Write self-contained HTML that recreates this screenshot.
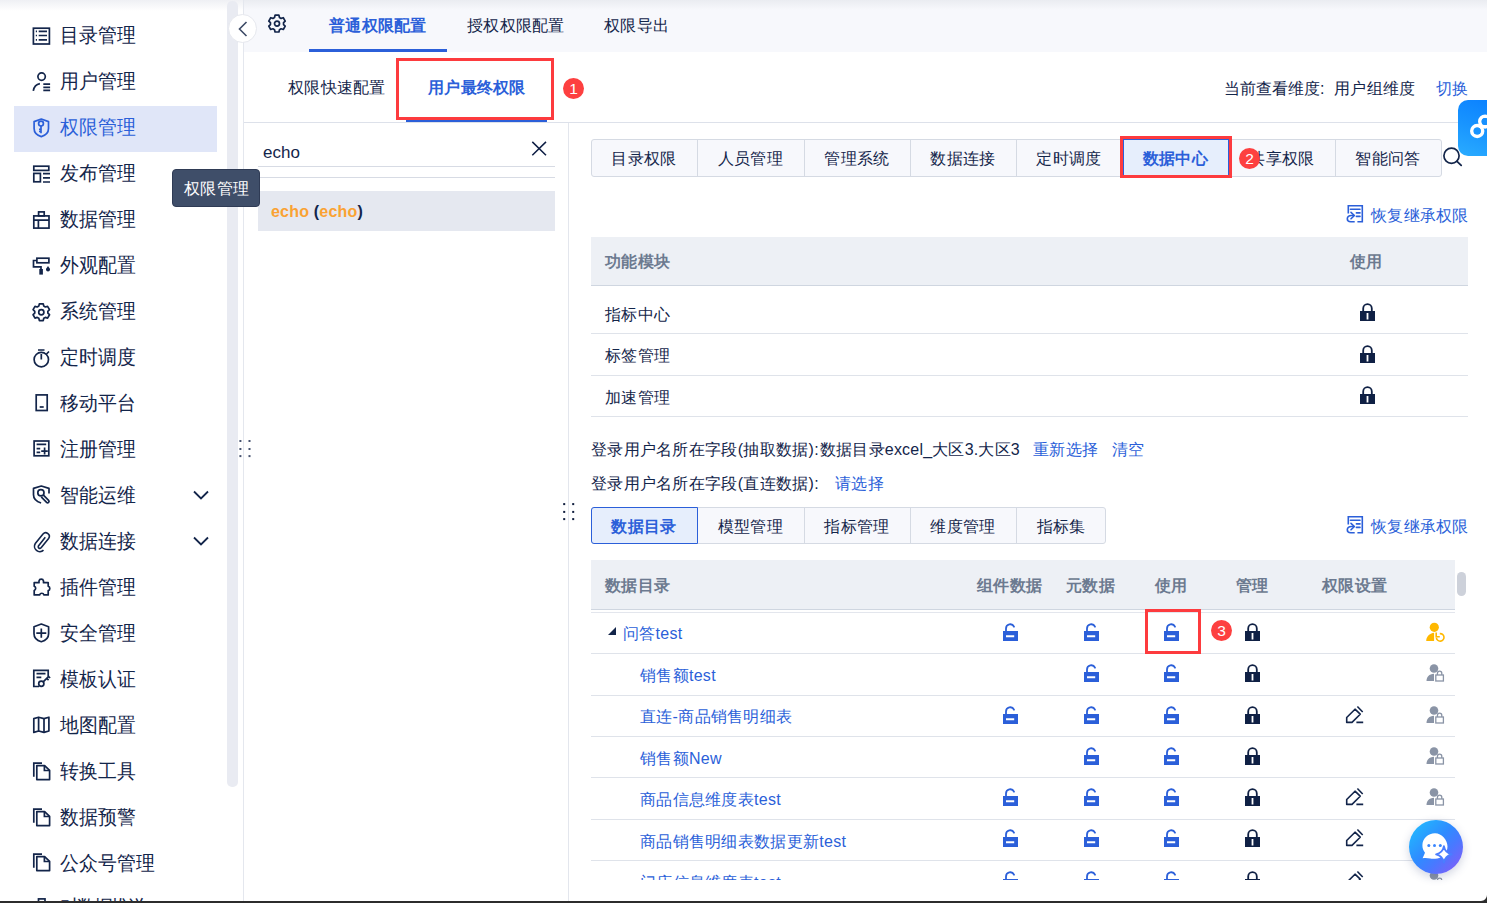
<!DOCTYPE html>
<html><head><meta charset="utf-8">
<style>
*{box-sizing:border-box;margin:0;padding:0}
html,body{width:1487px;height:903px;overflow:hidden;background:#fff;font-family:"Liberation Sans",sans-serif;color:#13254a}
.a{position:absolute}
.t{position:absolute;white-space:nowrap;line-height:1;letter-spacing:.3px;margin-top:1px}
svg{position:absolute;overflow:visible}
/* sidebar */
.side{left:0;top:0;width:243px;height:903px;background:#fff}
.mi{position:absolute;left:60px;font-size:19px;line-height:1;white-space:nowrap;color:#13254a;transform:scaleY(1.06);transform-origin:0 0}
.ico{position:absolute;left:33px;width:17px;height:18px}
.hdr{left:244px;top:0;width:1243px;height:52px;background:#f7f8fc}
.tab{font-size:16px;color:#13254a}
.ts{position:absolute;top:139px;height:38px;border:1px solid #d5dae3;background:#f7f8fc;font-size:16px;line-height:36px;text-align:center;color:#13254a}
.rl{position:absolute;height:1px;background:#dfe3ea}
.th{position:absolute;font-size:16px;font-weight:bold;color:#6c7a90;line-height:1;white-space:nowrap;letter-spacing:.3px;margin-top:1px}
.td{position:absolute;font-size:16px;line-height:1;white-space:nowrap;color:#13254a;letter-spacing:.3px;margin-top:1px}
.lk{position:absolute}
.badge{position:absolute;width:21px;height:21px;border-radius:50%;background:#fd4040;color:#fff;font-size:15.5px;line-height:21px;text-align:center}
.redbox{position:absolute;border:3px solid #fd3b3e}
.blue{color:#2b5fd9!important}
</style></head><body>

<!-- top shadow -->
<div class="a hdr"></div>

<!-- SIDEBAR -->
<div class="a side">
  <div class="a" style="left:14px;top:106px;width:203px;height:46px;background:#e0e6f8"></div>
  <div class="mi" style="top:25px">目录管理</div>
  <div class="mi" style="top:71px">用户管理</div>
  <div class="mi blue" style="top:117px">权限管理</div>
  <div class="mi" style="top:163px">发布管理</div>
  <div class="mi" style="top:209px">数据管理</div>
  <div class="mi" style="top:255px">外观配置</div>
  <div class="mi" style="top:301px">系统管理</div>
  <div class="mi" style="top:347px">定时调度</div>
  <div class="mi" style="top:393px">移动平台</div>
  <div class="mi" style="top:439px">注册管理</div>
  <div class="mi" style="top:485px">智能运维</div>
  <div class="mi" style="top:531px">数据连接</div>
  <div class="mi" style="top:577px">插件管理</div>
  <div class="mi" style="top:623px">安全管理</div>
  <div class="mi" style="top:669px">模板认证</div>
  <div class="mi" style="top:715px">地图配置</div>
  <div class="mi" style="top:761px">转换工具</div>
  <div class="mi" style="top:807px">数据预警</div>
  <div class="mi" style="top:853px">公众号管理</div>
  <div class="mi" style="top:897px;letter-spacing:-2px">对数据推送</div>
<svg style="left:32px;top:27px" width="20" height="22" viewBox="0 0 20 22" fill="none" stroke="#13254a" stroke-width="1.7"><rect x="1.4" y="1.2" width="16" height="15.8"/><path d="M6.7 4.3h8.3M6.7 8.5h8.3M6.7 12.8h8.3"/><path d="M3.8 4.3h1.2M3.8 8.5h1.2M3.8 12.8h1.2"/></svg>
<svg style="left:32px;top:72px" width="20" height="22" viewBox="0 0 20 22" fill="none" stroke="#13254a" stroke-width="1.7"><circle cx="9.6" cy="4.6" r="3.7"/><path d="M1.3 18.8c.6-3.6 3-6.6 6.6-7.2"/><path d="M11.3 12.2h6.8M11.3 15.3h6.8M11.3 18.3h6.8"/></svg>
<svg style="left:32px;top:118px" width="20" height="22" viewBox="0 0 20 22" fill="none" stroke="#2b5fd9" stroke-width="1.7"><path d="M9.3 1l7.2 2.6v7c0 4.3-3.2 6.9-7.2 8-4-1.1-7.2-3.7-7.2-8v-7z" stroke-linejoin="round"/><circle cx="9" cy="5.6" r="2.4"/><path d="M9 8v7.2M9 11.3H7M9 13.5H7"/></svg>
<svg style="left:32px;top:165px" width="20" height="22" viewBox="0 0 20 22" fill="none" stroke="#13254a" stroke-width="1.7"><rect x="1.8" y="1.2" width="15" height="4.2"/><rect x="1.8" y="8.4" width="6.6" height="8.4"/><path d="M11 8.6h7M11 12.8h7M11 17h7"/></svg>
<svg style="left:32px;top:211px" width="20" height="22" viewBox="0 0 20 22" fill="none" stroke="#13254a" stroke-width="1.7"><rect x="6.6" y="0.9" width="5.6" height="4"/><rect x="1.8" y="4.9" width="15.2" height="12.2"/><path d="M1.8 9.2h15.2M6.4 9.2v8"/></svg>
<svg style="left:32px;top:257px" width="20" height="22" viewBox="0 0 20 22" fill="none" stroke="#13254a" stroke-width="1.7"><rect x="4.9" y="1.2" width="12" height="4.6"/><path d="M4.9 3.5H1.5v6.3H9v3.4"/><rect x="7.3" y="12" width="3.6" height="5.6" fill="#13254a" stroke="none"/><path d="M16 9c1.3 1.7 2 2.7 2 3.5a2 2 0 0 1-4 0c0-.8.7-1.8 2-3.5z" fill="#13254a" stroke="none"/></svg>
<svg style="left:32px;top:302px" width="20" height="22" viewBox="0 0 20 22" fill="none" stroke="#13254a" stroke-width="1.7"><path d="M7.37 1.82 L11.23 1.82 L11.77 4.08 L13.36 5.00 L15.59 4.33 L17.52 7.69 L15.84 9.28 L15.84 11.12 L17.52 12.71 L15.59 16.07 L13.36 15.40 L11.77 16.32 L11.23 18.58 L7.37 18.58 L6.83 16.32 L5.24 15.40 L3.01 16.07 L1.08 12.71 L2.76 11.12 L2.76 9.28 L1.08 7.69 L3.01 4.33 L5.24 5.00 L6.83 4.08Z" stroke-linejoin="round"/><circle cx="9.3" cy="10.2" r="2.6"/></svg>
<svg style="left:32px;top:349px" width="20" height="22" viewBox="0 0 20 22" fill="none" stroke="#13254a" stroke-width="1.7"><circle cx="9.3" cy="10.6" r="7.2"/><path d="M6 1h6.5M9.3 5v5.5M14.5 5l2.5-2.5"/></svg>
<svg style="left:32px;top:394px" width="20" height="22" viewBox="0 0 20 22" fill="none" stroke="#13254a" stroke-width="1.7"><rect x="4.2" y="0.9" width="11" height="15.6"/><path d="M7.7 13h4"/></svg>
<svg style="left:32px;top:440px" width="20" height="22" viewBox="0 0 20 22" fill="none" stroke="#13254a" stroke-width="1.7"><rect x="2.1" y="1" width="14.7" height="14.8"/><path d="M4.6 4.3h9.6M4.6 8.7h3.6M4.6 12.4h3.6M12.6 7.5v7M9.2 11.2h6.6"/></svg>
<svg style="left:32px;top:485px" width="20" height="22" viewBox="0 0 20 22" fill="none" stroke="#13254a" stroke-width="1.7"><path d="M17 8.6V3.4L9.3 1 1.5 3.4v6.4c0 4 3.2 6.9 7.6 8.2" stroke-linejoin="round"/><circle cx="8.9" cy="7.8" r="3.1"/><path d="M11.2 9.9l5.4 5.4a1.4 1.4 0 0 1-2 2l-5.4-5.4" stroke-linejoin="round"/></svg>
<svg style="left:32px;top:531px" width="20" height="22" viewBox="0 0 20 22" fill="none" stroke="#13254a" stroke-width="1.6"><path d="M13.3 6.2L6.6 14.8a1.6 1.6 0 0 0 2.5 2l7.5-9.3a3.6 3.6 0 0 0-5.6-4.5l-7.7 9.5a5.3 5.3 0 0 0 8.2 6.6"/></svg>
<svg style="left:32px;top:578px" width="20" height="22" viewBox="0 0 20 22" fill="none" stroke="#13254a" stroke-width="1.7"><path d="M7 3a2.3 2.3 0 0 1 4.5 0v1.7h4.7v3.5a2.3 2.3 0 0 1 0 4.4v4.3h-4.2a2.3 2.3 0 0 0-4.4 0H2.2v-4.4a2.3 2.3 0 0 0 0-4.3V4.7H7z" stroke-linejoin="round"/></svg>
<svg style="left:32px;top:623px" width="20" height="22" viewBox="0 0 20 22" fill="none" stroke="#13254a" stroke-width="1.7"><path d="M9.3 1l7.3 2.7v7c0 4.3-3.3 6.9-7.3 8-4-1.1-7.3-3.7-7.3-8v-7z" stroke-linejoin="round"/><path d="M9.3 5.4v9.3M4.3 10.1h10"/></svg>
<svg style="left:32px;top:669px" width="20" height="22" viewBox="0 0 20 22" fill="none" stroke="#13254a" stroke-width="1.7"><path d="M7 17.5H1.8V1.4h14.4v6"/><path d="M4.5 4.6h9M4.5 8.3h4.8"/><circle cx="9.3" cy="14.8" r="2.6"/><path d="M11.2 12.9l6-6M14.8 9.3l1.8 1.8M16.6 7.5l1.5 1.5"/></svg>
<svg style="left:32px;top:716px" width="20" height="22" viewBox="0 0 20 22" fill="none" stroke="#13254a" stroke-width="1.7"><path d="M1.8 2.6L6.6 1.2 12 2.6l4.9-1.4v13.8L12 16.4 6.6 15 1.8 16.4z" stroke-linejoin="round"/><path d="M6.6 1.2V15M12 2.6v13.8"/></svg>
<svg style="left:32px;top:762px" width="20" height="22" viewBox="0 0 20 22" fill="none" stroke="#13254a" stroke-width="1.7"><path d="M1.8 14.8V1.2h8.2"/><path d="M4.8 3.6h7.8l5 4.7v9.3H4.8z" stroke-linejoin="round"/><path d="M12.4 3.6v4.9h5"/></svg>
<svg style="left:32px;top:808px" width="20" height="22" viewBox="0 0 20 22" fill="none" stroke="#13254a" stroke-width="1.7"><path d="M1.8 14.8V1.2h8.2"/><path d="M4.8 3.6h7.8l5 4.7v9.3H4.8z" stroke-linejoin="round"/><path d="M12.4 3.6v4.9h5"/></svg>
<svg style="left:32px;top:853px" width="20" height="22" viewBox="0 0 20 22" fill="none" stroke="#13254a" stroke-width="1.7"><path d="M1.8 14.8V1.2h8.2"/><path d="M4.8 3.6h7.8l5 4.7v9.3H4.8z" stroke-linejoin="round"/><path d="M12.4 3.6v4.9h5"/></svg>
<svg style="left:32px;top:898px" width="20" height="22" viewBox="0 0 20 22" fill="none" stroke="#13254a" stroke-width="1.7"><rect x="6.5" y="0.9" width="6.5" height="12"/></svg>
<svg style="left:192px;top:489px" width="18" height="12" viewBox="0 0 18 12"><path d="M2 2.5l7 7 7-7" fill="none" stroke="#13254a" stroke-width="1.8"/></svg>
<svg style="left:192px;top:535px" width="18" height="12" viewBox="0 0 18 12"><path d="M2 2.5l7 7 7-7" fill="none" stroke="#13254a" stroke-width="1.8"/></svg>
  <!-- scroll track -->
</div>
<div class="a" style="left:243px;top:0;width:1px;height:903px;background:#e4e7ee"></div>


<!-- HEADER -->
<div class="a" style="left:244px;top:0;width:1243px;height:10px;background:linear-gradient(#eaecf1,rgba(247,248,252,0))"></div>
<div class="a" style="left:0;top:0;width:243px;height:11px;background:linear-gradient(#eff0f4,rgba(255,255,255,0))"></div>
<div class="a" style="left:227px;top:1px;width:11px;height:786px;background:#e9ebf2;border-radius:5px"></div>
<svg style="left:267px;top:14px" width="20" height="20" viewBox="0 0 20 20"><path d="M8.07 1.22 L11.93 1.22 L12.47 3.48 L14.06 4.40 L16.29 3.73 L18.22 7.09 L16.54 8.68 L16.54 10.52 L18.22 12.11 L16.29 15.47 L14.06 14.80 L12.47 15.72 L11.93 17.98 L8.07 17.98 L7.53 15.72 L5.94 14.80 L3.71 15.47 L1.78 12.11 L3.46 10.52 L3.46 8.68 L1.78 7.09 L3.71 3.73 L5.94 4.40 L7.53 3.48Z" fill="none" stroke="#13254a" stroke-width="1.7" stroke-linejoin="round"/><circle cx="10" cy="9.6" r="2.5" fill="none" stroke="#13254a" stroke-width="1.7"/></svg>
<div class="t tab blue" style="left:329px;top:17px;font-weight:bold">普通权限配置</div>
<div class="a" style="left:309px;top:49px;width:138px;height:3px;background:#2b5fd9"></div>
<div class="t tab" style="left:467px;top:17px">授权权限配置</div>
<div class="t tab" style="left:604px;top:17px">权限导出</div>

<!-- collapse button -->
<div class="a" style="left:228px;top:14px;width:29px;height:29px;border-radius:50%;background:#fff;border:1px solid #e6e8ee"></div>
<svg style="left:236px;top:20px" width="14" height="18" viewBox="0 0 14 18"><path d="M10.5 2L3.5 9l7 7" fill="none" stroke="#3c4a66" stroke-width="1.6"/></svg>

<!-- second row -->
<div class="t tab" style="left:288px;top:79px">权限快速配置</div>
<div class="t tab blue" style="left:428px;top:79px;font-weight:bold">用户最终权限</div>
<div class="a" style="left:406px;top:119px;width:141px;height:3px;background:#2b5fd9"></div>
<div class="redbox" style="left:396px;top:58px;width:158px;height:62px"></div>
<div class="badge" style="left:563px;top:78px">1</div>
<div class="t tab" style="left:1224px;top:80px;letter-spacing:0">当前查看维度:</div>
<div class="t tab" style="left:1334px;top:80px;letter-spacing:.3px">用户组维度</div>
<div class="t tab blue" style="left:1436px;top:80px">切换</div>
<div class="a" style="left:244px;top:122px;width:1243px;height:1px;background:#dde1ea"></div>

<!-- left panel -->
<div class="a" style="left:568px;top:123px;width:1px;height:780px;background:#e3e6ed"></div>
<div class="t" style="left:263px;top:143px;font-size:17px;color:#13254a;letter-spacing:0">echo</div>
<svg style="left:531px;top:141px" width="16" height="16" viewBox="0 0 16 16"><path d="M1.3 .9L15 14.3M15 .9L1.3 14.3" stroke="#0f1f45" stroke-width="1.5"/></svg>
<div class="a" style="left:258px;top:166px;width:297px;height:1px;background:#d7dbe4"></div>
<div class="a" style="left:258px;top:177px;width:297px;height:1px;background:#d7dbe4"></div>
<div class="a" style="left:258px;top:191px;width:297px;height:40px;background:#e5e8f0"></div>
<div class="t" style="left:271px;top:203px;font-size:16px;font-weight:bold;color:#13254a;letter-spacing:.2px"><span style="color:#faa233">echo</span> (<span style="color:#faa233">echo</span>)</div>

<!-- drag handles -->
<svg style="left:230px;top:430px" width="30" height="40"><g fill="#475370"><rect x="9.4" y="10" width="2" height="2"/><rect x="18.5" y="10" width="2" height="2"/><rect x="9.4" y="18" width="2" height="2"/><rect x="18.5" y="18" width="2" height="2"/><rect x="9.4" y="25.1" width="2" height="2"/><rect x="18.5" y="25.1" width="2" height="2"/></g></svg>
<svg style="left:555px;top:495px" width="30" height="35"><g fill="#0f1d3d"><rect x="8.2" y="8.1" width="2" height="2"/><rect x="17.2" y="8.1" width="2" height="2"/><rect x="8.2" y="15.9" width="2" height="2"/><rect x="17.2" y="15.9" width="2" height="2"/><rect x="8.2" y="23.1" width="2" height="2"/><rect x="17.2" y="23.1" width="2" height="2"/></g></svg>

<!-- tooltip -->
<div class="a" style="left:172px;top:169px;width:88px;height:38px;background:#3f4e69;border:1px solid #2f3b55;border-radius:4px"></div>
<div class="t" style="left:184px;top:180px;font-size:16px;color:#fff">权限管理</div>


<!-- RIGHT PANEL tab strip -->
<div class="a" style="left:591px;top:139px;width:851px;height:38px;border:1px solid #d5dae3;border-radius:3px;background:#f7f8fc"></div>
<div class="a" style="left:697px;top:140px;width:1px;height:36px;background:#d5dae3"></div>
<div class="a" style="left:804px;top:140px;width:1px;height:36px;background:#d5dae3"></div>
<div class="a" style="left:910px;top:140px;width:1px;height:36px;background:#d5dae3"></div>
<div class="a" style="left:1016px;top:140px;width:1px;height:36px;background:#d5dae3"></div>
<div class="a" style="left:1122px;top:140px;width:1px;height:36px;background:#d5dae3"></div>
<div class="a" style="left:1229px;top:140px;width:1px;height:36px;background:#d5dae3"></div>
<div class="a" style="left:1335px;top:140px;width:1px;height:36px;background:#d5dae3"></div>
<div class="ts0 t" style="left:591px;top:150px;width:106px;text-align:center;font-size:16px">目录权限</div>
<div class="ts0 t" style="left:697px;top:150px;width:107px;text-align:center;font-size:16px">人员管理</div>
<div class="ts0 t" style="left:804px;top:150px;width:106px;text-align:center;font-size:16px">管理系统</div>
<div class="ts0 t" style="left:910px;top:150px;width:106px;text-align:center;font-size:16px">数据连接</div>
<div class="ts0 t" style="left:1016px;top:150px;width:106px;text-align:center;font-size:16px">定时调度</div>
<div class="ts0 t" style="left:1229px;top:150px;width:106px;text-align:center;font-size:16px">共享权限</div>
<div class="ts0 t" style="left:1335px;top:150px;width:106px;text-align:center;font-size:16px">智能问答</div>
<div class="a" style="left:1123px;top:139px;width:106px;height:38px;background:#e6eefc;border:1px solid #2b5fd9"></div>
<div class="t blue" style="left:1122px;top:150px;width:107px;text-align:center;font-size:16px;font-weight:bold">数据中心</div>
<div class="redbox" style="left:1120px;top:136px;width:112px;height:42px;border-width:3px"></div>
<div class="badge" style="left:1239px;top:148px">2</div>
<svg style="left:1443px;top:147px" width="20" height="20" viewBox="0 0 20 20"><circle cx="8.5" cy="8.7" r="7.6" fill="none" stroke="#13254a" stroke-width="1.7"/><path d="M14 14.3l4.2 4" stroke="#13254a" stroke-width="1.8" stroke-linecap="round"/></svg>
<svg style="left:1346px;top:205px" width="18" height="19" viewBox="0 0 18 19" fill="none" stroke="#2b5fd9" stroke-width="1.6"><path d="M2.3 8.4V.8h14v15.9h-4.9"/><path d="M4.4 4.3H14M10.4 7.9H14M10.4 11.4H14" stroke-linecap="round"/><path d="M5 7.4l3.4 3.1L5 13.8" stroke-linejoin="round" stroke-linecap="round"/><path d="M8.2 10.5H5.3C3 10.5 1.3 11.9 1.3 13.7s1.4 3 3.4 3h4"/></svg>
<div class="t blue" style="left:1371px;top:207px;font-size:16px">恢复继承权限</div>
<div class="a" style="left:591px;top:237px;width:877px;height:49px;background:#edf0f5;border-bottom:1px solid #cfd6e0"></div>
<div class="th" style="left:605px;top:253px">功能模块</div>
<div class="th" style="left:1350px;top:253px">使用</div>
<div class="rl" style="left:591px;top:333px;width:877px"></div>
<div class="rl" style="left:591px;top:375px;width:877px"></div>
<div class="rl" style="left:591px;top:416px;width:877px"></div>
<div class="td" style="left:605px;top:306px">指标中心</div>
<div class="td" style="left:605px;top:347px">标签管理</div>
<div class="td" style="left:605px;top:389px">加速管理</div>
<svg style="left:1360px;top:303px" width="15" height="18" viewBox="0 0 15 18"><path d="M3.2 8.5V5.5a4.3 4.3 0 0 1 8.6 0v3" fill="none" stroke="#0f2044" stroke-width="1.8"/><path d="M0 8h15v10H0z M6.6 10h1.8v6.4H6.6z" fill="#0f2044" fill-rule="evenodd"/></svg>
<svg style="left:1360px;top:345px" width="15" height="18" viewBox="0 0 15 18"><path d="M3.2 8.5V5.5a4.3 4.3 0 0 1 8.6 0v3" fill="none" stroke="#0f2044" stroke-width="1.8"/><path d="M0 8h15v10H0z M6.6 10h1.8v6.4H6.6z" fill="#0f2044" fill-rule="evenodd"/></svg>
<svg style="left:1360px;top:386px" width="15" height="18" viewBox="0 0 15 18"><path d="M3.2 8.5V5.5a4.3 4.3 0 0 1 8.6 0v3" fill="none" stroke="#0f2044" stroke-width="1.8"/><path d="M0 8h15v10H0z M6.6 10h1.8v6.4H6.6z" fill="#0f2044" fill-rule="evenodd"/></svg>
<div class="td" style="left:591px;top:441px;letter-spacing:0.3px">登录用户名所在字段(抽取数据):</div>
<div class="td" style="left:820px;top:441px;letter-spacing:0.2px">数据目录excel_大区3.大区3</div>
<div class="td blue" style="left:1033px;top:441px">重新选择</div>
<div class="td blue" style="left:1112px;top:441px">清空</div>
<div class="td" style="left:591px;top:475px;letter-spacing:0.3px">登录用户名所在字段(直连数据):</div>
<div class="td blue" style="left:835px;top:475px">请选择</div>
<div class="a" style="left:591px;top:507px;width:515px;height:37px;border:1px solid #d5dae3;border-radius:3px;background:#f7f8fc"></div>
<div class="a" style="left:697px;top:508px;width:1px;height:35px;background:#d5dae3"></div>
<div class="a" style="left:804px;top:508px;width:1px;height:35px;background:#d5dae3"></div>
<div class="a" style="left:910px;top:508px;width:1px;height:35px;background:#d5dae3"></div>
<div class="a" style="left:1016px;top:508px;width:1px;height:35px;background:#d5dae3"></div>
<div class="a" style="left:591px;top:507px;width:107px;height:37px;background:#e6eefc;border:1px solid #2b5fd9;border-radius:3px 0 0 3px"></div>
<div class="t" style="left:591px;top:518px;width:106px;text-align:center;font-size:16px;font-weight:bold;color:#2b5fd9;">数据目录</div>
<div class="t" style="left:697px;top:518px;width:107px;text-align:center;font-size:16px;">模型管理</div>
<div class="t" style="left:804px;top:518px;width:106px;text-align:center;font-size:16px;">指标管理</div>
<div class="t" style="left:910px;top:518px;width:106px;text-align:center;font-size:16px;">维度管理</div>
<div class="t" style="left:1016px;top:518px;width:90px;text-align:center;font-size:16px;">指标集</div>
<svg style="left:1346px;top:516px" width="18" height="19" viewBox="0 0 18 19" fill="none" stroke="#2b5fd9" stroke-width="1.6"><path d="M2.3 8.4V.8h14v15.9h-4.9"/><path d="M4.4 4.3H14M10.4 7.9H14M10.4 11.4H14" stroke-linecap="round"/><path d="M5 7.4l3.4 3.1L5 13.8" stroke-linejoin="round" stroke-linecap="round"/><path d="M8.2 10.5H5.3C3 10.5 1.3 11.9 1.3 13.7s1.4 3 3.4 3h4"/></svg>
<div class="t blue" style="left:1371px;top:518px;font-size:16px">恢复继承权限</div>
<div class="a" style="left:591px;top:560px;width:864px;height:50px;background:#edf0f5;border-bottom:1px solid #cfd6e0"></div>
<div class="rl" style="left:591px;top:612px;width:864px;background:#e3e6ed"></div>
<div class="a" style="left:1455px;top:560px;width:13px;height:320px;background:#fff"></div>
<div class="a" style="left:1457px;top:572px;width:9px;height:24px;border-radius:4.5px;background:#cdd1da"></div>
<div class="th" style="left:605px;top:577px">数据目录</div>
<div class="th" style="left:977px;top:577px">组件数据</div>
<div class="th" style="left:1066px;top:577px">元数据</div>
<div class="th" style="left:1155px;top:577px">使用</div>
<div class="th" style="left:1236px;top:577px">管理</div>
<div class="th" style="left:1322px;top:577px">权限设置</div>
<div class="a" style="left:591px;top:612px;width:864px;height:268px;overflow:hidden">
<div class="td blue" style="left:32px;top:13px">问答test</div>
<div class="td blue" style="left:49px;top:55px">销售额test</div>
<div class="td blue" style="left:49px;top:96px">直连-商品销售明细表</div>
<div class="td blue" style="left:49px;top:138px">销售额New</div>
<div class="td blue" style="left:49px;top:179px">商品信息维度表test</div>
<div class="td blue" style="left:49px;top:221px">商品销售明细表数据更新test</div>
<div class="td blue" style="left:49px;top:262px">门店信息维度表test</div>
<div class="rl" style="left:0;top:41px;width:864px"></div>
<div class="rl" style="left:0;top:83px;width:864px"></div>
<div class="rl" style="left:0;top:124px;width:864px"></div>
<div class="rl" style="left:0;top:165px;width:864px"></div>
<div class="rl" style="left:0;top:207px;width:864px"></div>
<div class="rl" style="left:0;top:248px;width:864px"></div>
<svg style="left:17px;top:15px" width="8" height="8"><path d="M8 0V8H0z" fill="#13254a"/></svg>
<svg style="left:412px;top:11px" width="15" height="18" viewBox="0 0 15 18"><path d="M3 8.5V5.5a4.2 4.2 0 0 1 8-1.8" fill="none" stroke="#2b5fd9" stroke-width="1.8" stroke-linecap="round"/><path d="M0 8h15v10H0z M3 12.2h8.2v2H3z" fill="#2b5fd9" fill-rule="evenodd"/></svg>
<svg style="left:493px;top:11px" width="15" height="18" viewBox="0 0 15 18"><path d="M3 8.5V5.5a4.2 4.2 0 0 1 8-1.8" fill="none" stroke="#2b5fd9" stroke-width="1.8" stroke-linecap="round"/><path d="M0 8h15v10H0z M3 12.2h8.2v2H3z" fill="#2b5fd9" fill-rule="evenodd"/></svg>
<svg style="left:573px;top:11px" width="15" height="18" viewBox="0 0 15 18"><path d="M3 8.5V5.5a4.2 4.2 0 0 1 8-1.8" fill="none" stroke="#2b5fd9" stroke-width="1.8" stroke-linecap="round"/><path d="M0 8h15v10H0z M3 12.2h8.2v2H3z" fill="#2b5fd9" fill-rule="evenodd"/></svg>
<svg style="left:654px;top:11px" width="15" height="18" viewBox="0 0 15 18"><path d="M3.2 8.5V5.5a4.3 4.3 0 0 1 8.6 0v3" fill="none" stroke="#0f2044" stroke-width="1.8"/><path d="M0 8h15v10H0z M6.6 10h1.8v6.4H6.6z" fill="#0f2044" fill-rule="evenodd"/></svg>
<svg style="left:835px;top:11px" width="19" height="18" viewBox="0 0 19 18"><circle cx="8.3" cy="4.3" r="4.6" fill="#ffb800"/><path d="M0.2 17.9c0-4 3-7.8 8.1-8.2v8.2z" fill="#ffb800"/><rect x="8.3" y="9" width="1.9" height="9" fill="#fff"/><path d="M10.4 14.6A3.8 3.8 0 1 0 13.8 10.6" fill="none" stroke="#ffb800" stroke-width="1.6"/><path d="M10.2 9.6v4.2h3.6" fill="none" stroke="#ffb800" stroke-width="1.6"/></svg>
<svg style="left:493px;top:52px" width="15" height="18" viewBox="0 0 15 18"><path d="M3 8.5V5.5a4.2 4.2 0 0 1 8-1.8" fill="none" stroke="#2b5fd9" stroke-width="1.8" stroke-linecap="round"/><path d="M0 8h15v10H0z M3 12.2h8.2v2H3z" fill="#2b5fd9" fill-rule="evenodd"/></svg>
<svg style="left:573px;top:52px" width="15" height="18" viewBox="0 0 15 18"><path d="M3 8.5V5.5a4.2 4.2 0 0 1 8-1.8" fill="none" stroke="#2b5fd9" stroke-width="1.8" stroke-linecap="round"/><path d="M0 8h15v10H0z M3 12.2h8.2v2H3z" fill="#2b5fd9" fill-rule="evenodd"/></svg>
<svg style="left:654px;top:52px" width="15" height="18" viewBox="0 0 15 18"><path d="M3.2 8.5V5.5a4.3 4.3 0 0 1 8.6 0v3" fill="none" stroke="#0f2044" stroke-width="1.8"/><path d="M0 8h15v10H0z M6.6 10h1.8v6.4H6.6z" fill="#0f2044" fill-rule="evenodd"/></svg>
<svg style="left:835px;top:52px" width="19" height="18" viewBox="0 0 19 18"><circle cx="8" cy="4.5" r="4.3" fill="#8a94a6"/><path d="M0.5 17c0-4 2.5-7 7.5-7.2V17z" fill="#8a94a6"/><rect x="9.8" y="11" width="7.6" height="6" fill="none" stroke="#8a94a6" stroke-width="1.3"/><path d="M11.4 11V9.4a2.2 2.2 0 0 1 4.4 0V11" fill="none" stroke="#8a94a6" stroke-width="1.3"/></svg>
<svg style="left:412px;top:94px" width="15" height="18" viewBox="0 0 15 18"><path d="M3 8.5V5.5a4.2 4.2 0 0 1 8-1.8" fill="none" stroke="#2b5fd9" stroke-width="1.8" stroke-linecap="round"/><path d="M0 8h15v10H0z M3 12.2h8.2v2H3z" fill="#2b5fd9" fill-rule="evenodd"/></svg>
<svg style="left:493px;top:94px" width="15" height="18" viewBox="0 0 15 18"><path d="M3 8.5V5.5a4.2 4.2 0 0 1 8-1.8" fill="none" stroke="#2b5fd9" stroke-width="1.8" stroke-linecap="round"/><path d="M0 8h15v10H0z M3 12.2h8.2v2H3z" fill="#2b5fd9" fill-rule="evenodd"/></svg>
<svg style="left:573px;top:94px" width="15" height="18" viewBox="0 0 15 18"><path d="M3 8.5V5.5a4.2 4.2 0 0 1 8-1.8" fill="none" stroke="#2b5fd9" stroke-width="1.8" stroke-linecap="round"/><path d="M0 8h15v10H0z M3 12.2h8.2v2H3z" fill="#2b5fd9" fill-rule="evenodd"/></svg>
<svg style="left:654px;top:94px" width="15" height="18" viewBox="0 0 15 18"><path d="M3.2 8.5V5.5a4.3 4.3 0 0 1 8.6 0v3" fill="none" stroke="#0f2044" stroke-width="1.8"/><path d="M0 8h15v10H0z M6.6 10h1.8v6.4H6.6z" fill="#0f2044" fill-rule="evenodd"/></svg>
<svg style="left:754px;top:94px" width="19" height="18" viewBox="0 0 19 18" fill="none" stroke="#13254a" stroke-width="1.6"><path d="M1.7 16.4V11.5L10 3.2l5.2 5L7 16.4z" stroke-linejoin="round"/><path d="M12.4 .5l5.3 5.5M11.4 16.4h6.8"/></svg>
<svg style="left:835px;top:94px" width="19" height="18" viewBox="0 0 19 18"><circle cx="8" cy="4.5" r="4.3" fill="#8a94a6"/><path d="M0.5 17c0-4 2.5-7 7.5-7.2V17z" fill="#8a94a6"/><rect x="9.8" y="11" width="7.6" height="6" fill="none" stroke="#8a94a6" stroke-width="1.3"/><path d="M11.4 11V9.4a2.2 2.2 0 0 1 4.4 0V11" fill="none" stroke="#8a94a6" stroke-width="1.3"/></svg>
<svg style="left:493px;top:135px" width="15" height="18" viewBox="0 0 15 18"><path d="M3 8.5V5.5a4.2 4.2 0 0 1 8-1.8" fill="none" stroke="#2b5fd9" stroke-width="1.8" stroke-linecap="round"/><path d="M0 8h15v10H0z M3 12.2h8.2v2H3z" fill="#2b5fd9" fill-rule="evenodd"/></svg>
<svg style="left:573px;top:135px" width="15" height="18" viewBox="0 0 15 18"><path d="M3 8.5V5.5a4.2 4.2 0 0 1 8-1.8" fill="none" stroke="#2b5fd9" stroke-width="1.8" stroke-linecap="round"/><path d="M0 8h15v10H0z M3 12.2h8.2v2H3z" fill="#2b5fd9" fill-rule="evenodd"/></svg>
<svg style="left:654px;top:135px" width="15" height="18" viewBox="0 0 15 18"><path d="M3.2 8.5V5.5a4.3 4.3 0 0 1 8.6 0v3" fill="none" stroke="#0f2044" stroke-width="1.8"/><path d="M0 8h15v10H0z M6.6 10h1.8v6.4H6.6z" fill="#0f2044" fill-rule="evenodd"/></svg>
<svg style="left:835px;top:135px" width="19" height="18" viewBox="0 0 19 18"><circle cx="8" cy="4.5" r="4.3" fill="#8a94a6"/><path d="M0.5 17c0-4 2.5-7 7.5-7.2V17z" fill="#8a94a6"/><rect x="9.8" y="11" width="7.6" height="6" fill="none" stroke="#8a94a6" stroke-width="1.3"/><path d="M11.4 11V9.4a2.2 2.2 0 0 1 4.4 0V11" fill="none" stroke="#8a94a6" stroke-width="1.3"/></svg>
<svg style="left:412px;top:176px" width="15" height="18" viewBox="0 0 15 18"><path d="M3 8.5V5.5a4.2 4.2 0 0 1 8-1.8" fill="none" stroke="#2b5fd9" stroke-width="1.8" stroke-linecap="round"/><path d="M0 8h15v10H0z M3 12.2h8.2v2H3z" fill="#2b5fd9" fill-rule="evenodd"/></svg>
<svg style="left:493px;top:176px" width="15" height="18" viewBox="0 0 15 18"><path d="M3 8.5V5.5a4.2 4.2 0 0 1 8-1.8" fill="none" stroke="#2b5fd9" stroke-width="1.8" stroke-linecap="round"/><path d="M0 8h15v10H0z M3 12.2h8.2v2H3z" fill="#2b5fd9" fill-rule="evenodd"/></svg>
<svg style="left:573px;top:176px" width="15" height="18" viewBox="0 0 15 18"><path d="M3 8.5V5.5a4.2 4.2 0 0 1 8-1.8" fill="none" stroke="#2b5fd9" stroke-width="1.8" stroke-linecap="round"/><path d="M0 8h15v10H0z M3 12.2h8.2v2H3z" fill="#2b5fd9" fill-rule="evenodd"/></svg>
<svg style="left:654px;top:176px" width="15" height="18" viewBox="0 0 15 18"><path d="M3.2 8.5V5.5a4.3 4.3 0 0 1 8.6 0v3" fill="none" stroke="#0f2044" stroke-width="1.8"/><path d="M0 8h15v10H0z M6.6 10h1.8v6.4H6.6z" fill="#0f2044" fill-rule="evenodd"/></svg>
<svg style="left:754px;top:176px" width="19" height="18" viewBox="0 0 19 18" fill="none" stroke="#13254a" stroke-width="1.6"><path d="M1.7 16.4V11.5L10 3.2l5.2 5L7 16.4z" stroke-linejoin="round"/><path d="M12.4 .5l5.3 5.5M11.4 16.4h6.8"/></svg>
<svg style="left:835px;top:176px" width="19" height="18" viewBox="0 0 19 18"><circle cx="8" cy="4.5" r="4.3" fill="#8a94a6"/><path d="M0.5 17c0-4 2.5-7 7.5-7.2V17z" fill="#8a94a6"/><rect x="9.8" y="11" width="7.6" height="6" fill="none" stroke="#8a94a6" stroke-width="1.3"/><path d="M11.4 11V9.4a2.2 2.2 0 0 1 4.4 0V11" fill="none" stroke="#8a94a6" stroke-width="1.3"/></svg>
<svg style="left:412px;top:217px" width="15" height="18" viewBox="0 0 15 18"><path d="M3 8.5V5.5a4.2 4.2 0 0 1 8-1.8" fill="none" stroke="#2b5fd9" stroke-width="1.8" stroke-linecap="round"/><path d="M0 8h15v10H0z M3 12.2h8.2v2H3z" fill="#2b5fd9" fill-rule="evenodd"/></svg>
<svg style="left:493px;top:217px" width="15" height="18" viewBox="0 0 15 18"><path d="M3 8.5V5.5a4.2 4.2 0 0 1 8-1.8" fill="none" stroke="#2b5fd9" stroke-width="1.8" stroke-linecap="round"/><path d="M0 8h15v10H0z M3 12.2h8.2v2H3z" fill="#2b5fd9" fill-rule="evenodd"/></svg>
<svg style="left:573px;top:217px" width="15" height="18" viewBox="0 0 15 18"><path d="M3 8.5V5.5a4.2 4.2 0 0 1 8-1.8" fill="none" stroke="#2b5fd9" stroke-width="1.8" stroke-linecap="round"/><path d="M0 8h15v10H0z M3 12.2h8.2v2H3z" fill="#2b5fd9" fill-rule="evenodd"/></svg>
<svg style="left:654px;top:217px" width="15" height="18" viewBox="0 0 15 18"><path d="M3.2 8.5V5.5a4.3 4.3 0 0 1 8.6 0v3" fill="none" stroke="#0f2044" stroke-width="1.8"/><path d="M0 8h15v10H0z M6.6 10h1.8v6.4H6.6z" fill="#0f2044" fill-rule="evenodd"/></svg>
<svg style="left:754px;top:217px" width="19" height="18" viewBox="0 0 19 18" fill="none" stroke="#13254a" stroke-width="1.6"><path d="M1.7 16.4V11.5L10 3.2l5.2 5L7 16.4z" stroke-linejoin="round"/><path d="M12.4 .5l5.3 5.5M11.4 16.4h6.8"/></svg>
<svg style="left:835px;top:217px" width="19" height="18" viewBox="0 0 19 18"><circle cx="8" cy="4.5" r="4.3" fill="#8a94a6"/><path d="M0.5 17c0-4 2.5-7 7.5-7.2V17z" fill="#8a94a6"/><rect x="9.8" y="11" width="7.6" height="6" fill="none" stroke="#8a94a6" stroke-width="1.3"/><path d="M11.4 11V9.4a2.2 2.2 0 0 1 4.4 0V11" fill="none" stroke="#8a94a6" stroke-width="1.3"/></svg>
<svg style="left:412px;top:259px" width="15" height="18" viewBox="0 0 15 18"><path d="M3 8.5V5.5a4.2 4.2 0 0 1 8-1.8" fill="none" stroke="#2b5fd9" stroke-width="1.8" stroke-linecap="round"/><path d="M0 8h15v10H0z M3 12.2h8.2v2H3z" fill="#2b5fd9" fill-rule="evenodd"/></svg>
<svg style="left:493px;top:259px" width="15" height="18" viewBox="0 0 15 18"><path d="M3 8.5V5.5a4.2 4.2 0 0 1 8-1.8" fill="none" stroke="#2b5fd9" stroke-width="1.8" stroke-linecap="round"/><path d="M0 8h15v10H0z M3 12.2h8.2v2H3z" fill="#2b5fd9" fill-rule="evenodd"/></svg>
<svg style="left:573px;top:259px" width="15" height="18" viewBox="0 0 15 18"><path d="M3 8.5V5.5a4.2 4.2 0 0 1 8-1.8" fill="none" stroke="#2b5fd9" stroke-width="1.8" stroke-linecap="round"/><path d="M0 8h15v10H0z M3 12.2h8.2v2H3z" fill="#2b5fd9" fill-rule="evenodd"/></svg>
<svg style="left:654px;top:259px" width="15" height="18" viewBox="0 0 15 18"><path d="M3.2 8.5V5.5a4.3 4.3 0 0 1 8.6 0v3" fill="none" stroke="#0f2044" stroke-width="1.8"/><path d="M0 8h15v10H0z M6.6 10h1.8v6.4H6.6z" fill="#0f2044" fill-rule="evenodd"/></svg>
<svg style="left:754px;top:259px" width="19" height="18" viewBox="0 0 19 18" fill="none" stroke="#13254a" stroke-width="1.6"><path d="M1.7 16.4V11.5L10 3.2l5.2 5L7 16.4z" stroke-linejoin="round"/><path d="M12.4 .5l5.3 5.5M11.4 16.4h6.8"/></svg>
<svg style="left:835px;top:259px" width="19" height="18" viewBox="0 0 19 18"><circle cx="8" cy="4.5" r="4.3" fill="#8a94a6"/><path d="M0.5 17c0-4 2.5-7 7.5-7.2V17z" fill="#8a94a6"/><rect x="9.8" y="11" width="7.6" height="6" fill="none" stroke="#8a94a6" stroke-width="1.3"/><path d="M11.4 11V9.4a2.2 2.2 0 0 1 4.4 0V11" fill="none" stroke="#8a94a6" stroke-width="1.3"/></svg>
</div>
<div class="redbox" style="left:1145px;top:609px;width:56px;height:45px"></div>
<div class="badge" style="left:1211px;top:620px">3</div>
<div class="a" style="left:1458px;top:100px;width:40px;height:56px;border-radius:10px 0 0 10px;background:linear-gradient(200deg,#0a80ff 0%,#1894ff 50%,#2aacff 100%)"></div>
<svg style="left:1458px;top:100px" width="29" height="56" viewBox="0 0 29 56"><circle cx="19.2" cy="31" r="5.4" fill="none" stroke="#fff" stroke-width="3.6"/><circle cx="27.1" cy="21.6" r="5.3" fill="none" stroke="#fff" stroke-width="3.6"/><circle cx="19.2" cy="31" r="3.6" fill="#1894ff"/><circle cx="27.1" cy="21.6" r="3.5" fill="#1690ff"/></svg>
<div class="a" style="left:1409px;top:820px;width:54px;height:54px;border-radius:50%;background:linear-gradient(135deg,#1ec3ff 0%,#2f8bff 45%,#4a78ff 65%,#9058f6 100%);box-shadow:0 3px 10px rgba(40,60,120,.22)"></div>
<svg style="left:1405px;top:815px" width="65" height="65" viewBox="0 0 65 65"><path d="M30 18.2c-6.9 0-12.6 5.3-12.6 12 0 3 .9 5.4 2.6 7.5L17.6 43.2c2.6-.5 5.2-.2 7.7.3 1.5.3 3 .2 4.7.2 6.9 0 12.5-5.5 12.5-12.2S36.9 18.2 30 18.2z" fill="#fff"/><circle cx="23.8" cy="30.6" r="1.5" fill="#3a86ff"/><circle cx="29.5" cy="30.6" r="1.5" fill="#3a86ff"/><circle cx="35.3" cy="30.6" r="1.5" fill="#3a86ff"/><path d="M0 -8.2 Q1.3 -1.3 7.8 0 Q1.3 1.3 0 8.2 Q-1.3 1.3 -7.8 0 Q-1.3 -1.3 0 -8.2Z" fill="#fff" stroke="#4b7dff" stroke-width="1.8" stroke-linejoin="round" transform="translate(38.9 39.4)"/></svg>
<svg style="left:0;top:893px" width="1487" height="10" viewBox="0 0 1487 10"><path d="M0 8H1481a6 6 0 0 0 6-6V10H0z" fill="#2c2c2c"/></svg>

</body></html>
